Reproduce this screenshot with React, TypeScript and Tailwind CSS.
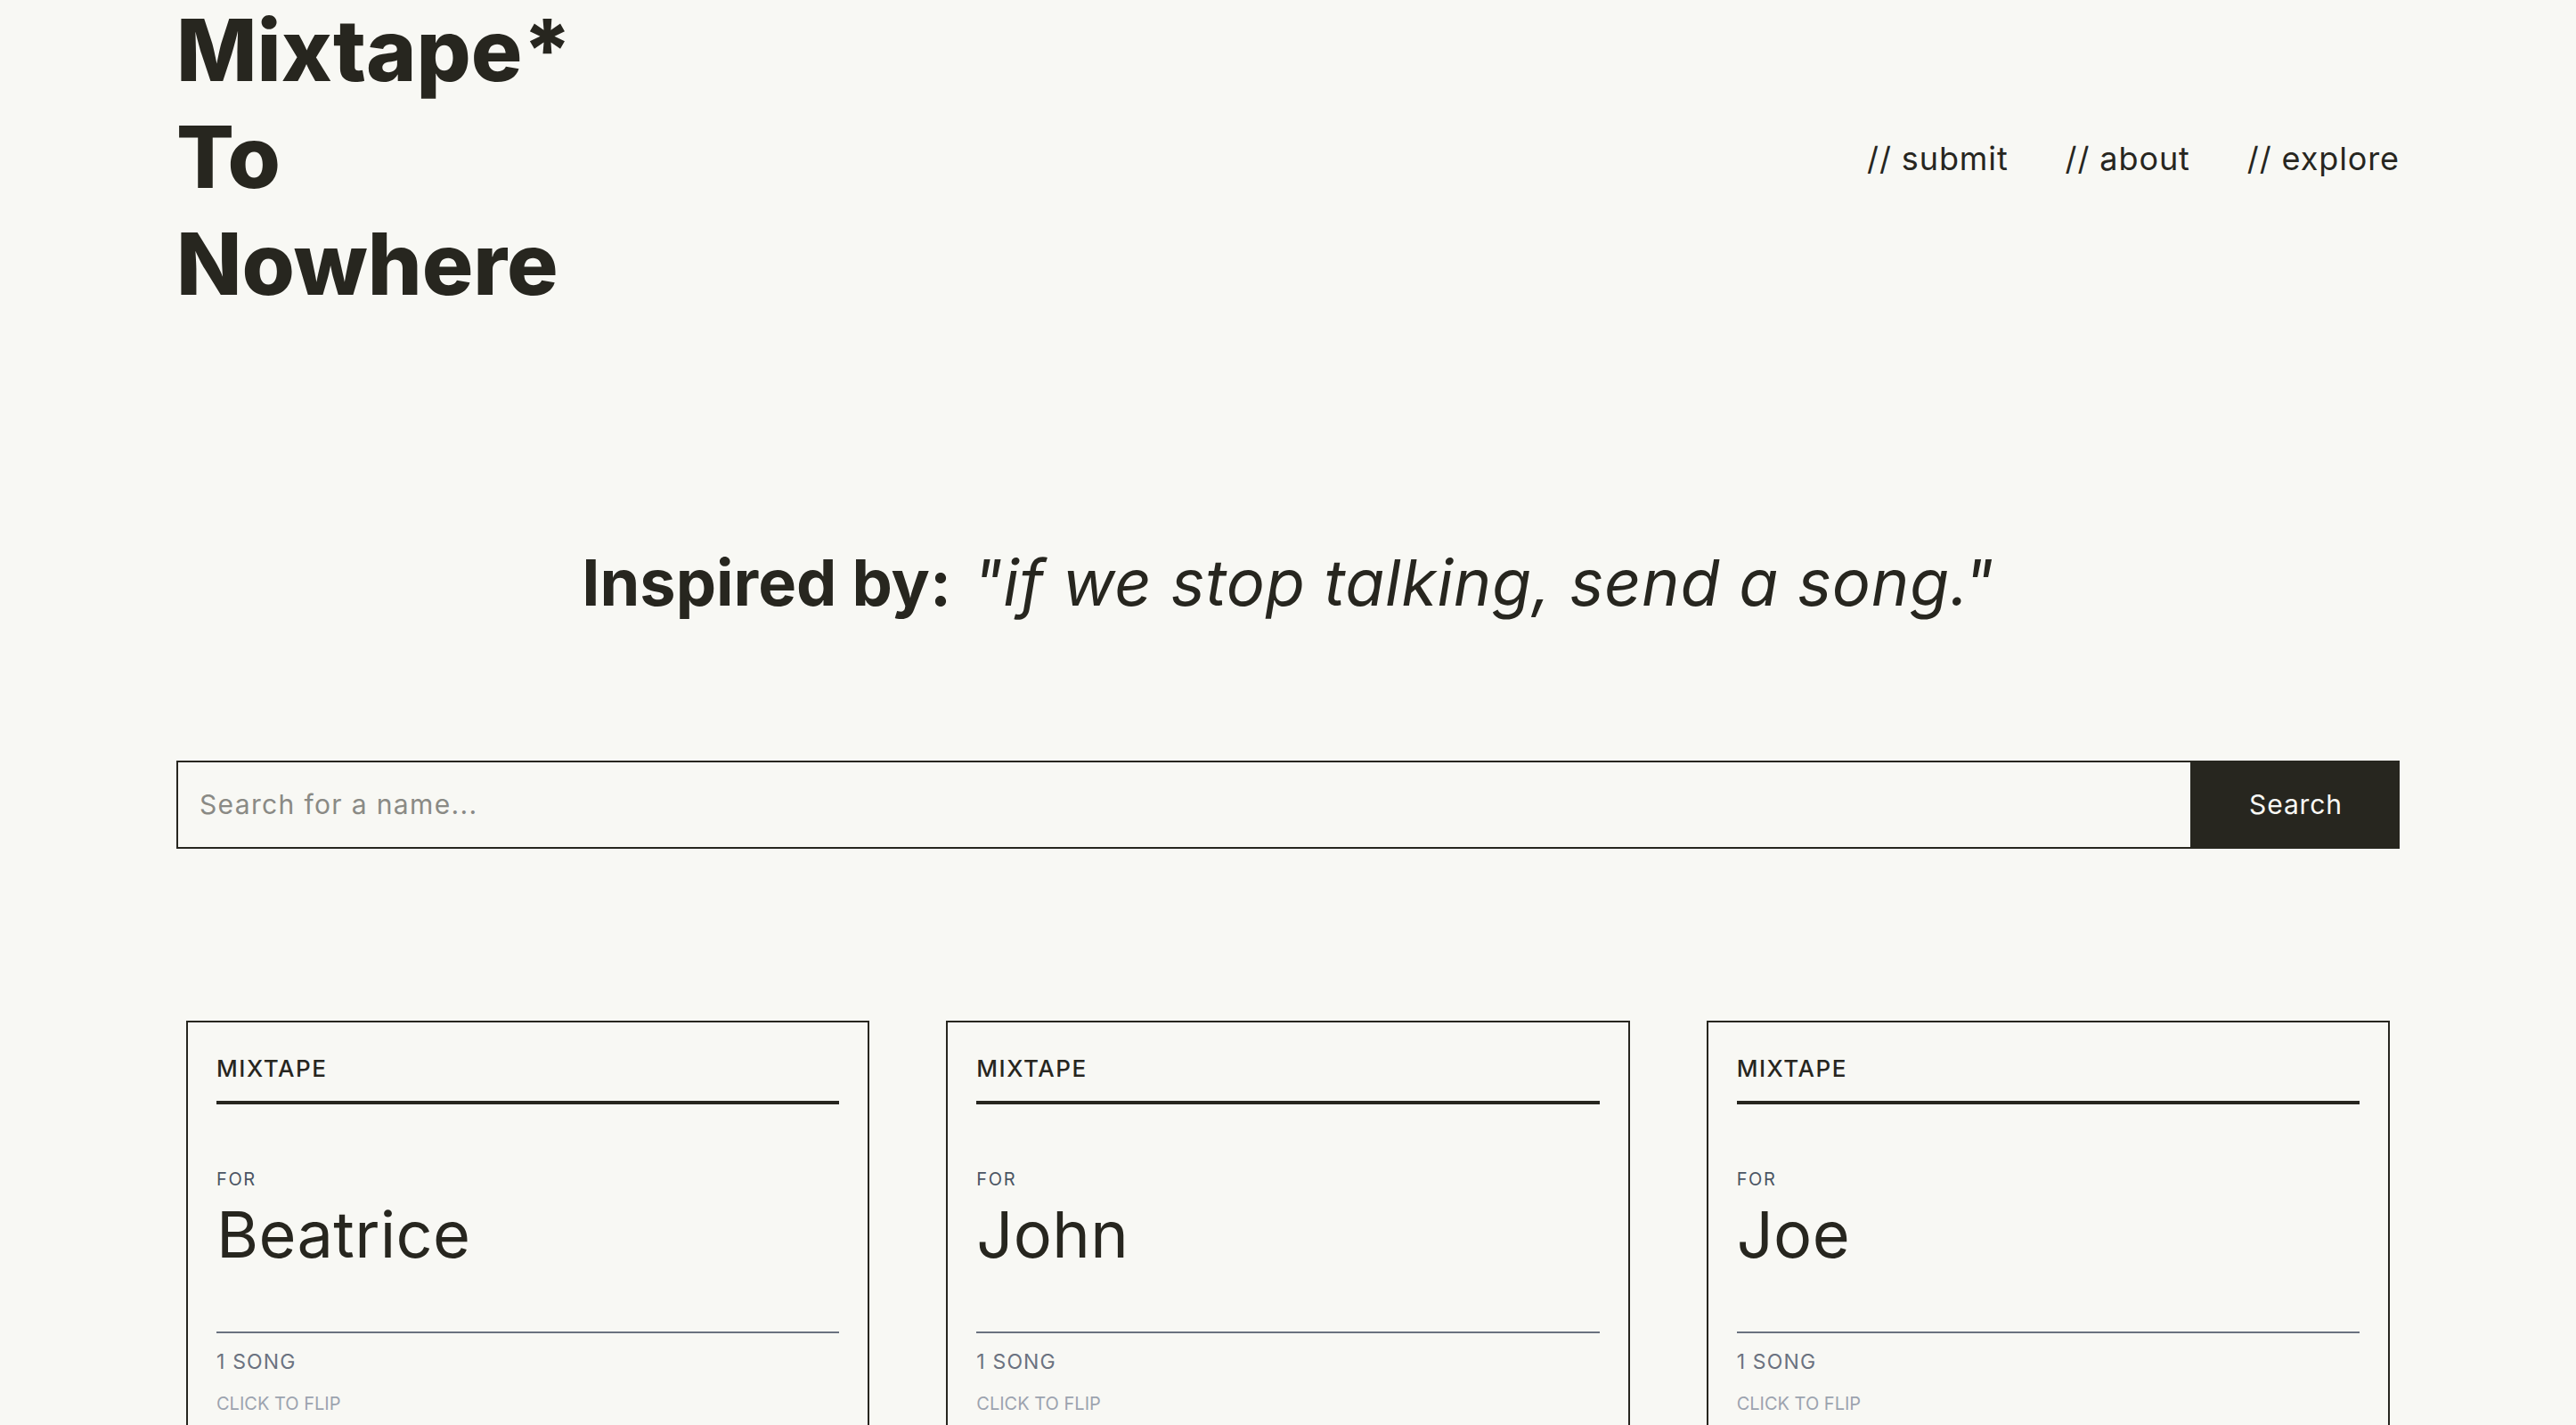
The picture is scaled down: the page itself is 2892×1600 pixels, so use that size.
const cards = [
  { name: 'Beatrice', songs: 1 },
  { name: 'John', songs: 1 },
  { name: 'Joe', songs: 1 },
];

const links = ['submit', 'about', 'explore'];

function MixtapeCard({ name, songs }: { name: string; songs: number }) {
  return (
    <div className="border-2 border-[#27261f] px-[32px] pt-[32px] pb-[40px]">
      <div className="border-b-4 border-[#27261f] pb-[17px]">
        <p className="text-[26px] leading-[1.5] font-medium tracking-[0.06em] text-[#27261f]">MIXTAPE</p>
      </div>
      <div className="pt-[69px] pb-[65px] border-b-2 border-[#6b7280]">
        <p className="text-[20px] leading-[1.5] tracking-[0.08em] text-[#4b5563]">FOR</p>
        <p className="mt-[4px] text-[72px] leading-[1.2] tracking-[0.005em] text-[#27261f]">{name}</p>
      </div>
      <p className="mt-[15px] text-[23px] leading-[1.5] tracking-[0.05em] text-[#6b7280]">
        {songs} {songs === 1 ? 'SONG' : 'SONGS'}
      </p>
      <p className="mt-[15px] text-[20px] leading-[1.5] text-[#9ca3af]">CLICK TO FLIP</p>
    </div>
  );
}

export default function App() {
  return (
    <div className="min-h-screen bg-[#f8f8f4] text-[#27261f] font-['Inter',sans-serif]">
      <div className="px-[198px]">
        {/* Header */}
        <header className="flex items-center justify-between">
          <h1 className="-mt-[4px] text-[96px] leading-[120px] font-extrabold">
            Mixtape*
            <br />
            To
            <br />
            Nowhere
          </h1>
          <nav className="flex gap-[64px] text-[36px] leading-none tracking-[0.025em]">
            {links.map((l) => (
              <a key={l} href="#" className="text-[#27261f]">
                // {l}
              </a>
            ))}
          </nav>
        </header>

        {/* Inspiration */}
        <div className="mt-[255px] flex justify-center gap-[24px] text-[72px] leading-[1.2]">
          <span className="font-bold">Inspired by:</span>
          <span className="italic tracking-[0.01em]">"if we stop talking, send a song."</span>
        </div>

        {/* Search */}
        <form className="mt-[157px] flex h-[99px]" onSubmit={(e) => e.preventDefault()}>
          <input
            type="text"
            placeholder="Search for a name..."
            className="flex-1 border-2 border-[#27261f] bg-transparent px-[24px] text-[30px] tracking-[0.045em] outline-none placeholder:text-[#8a8a85]"
          />
          <button type="submit" className="bg-[#27261f] px-[64px] text-[30px] tracking-[0.03em] text-[#f8f8f4]">
            Search
          </button>
        </form>

        {/* Cards */}
        <div className="mt-[193px] grid grid-cols-3 gap-[86px] px-[11px]">
          {cards.map((c) => (
            <MixtapeCard key={c.name} name={c.name} songs={c.songs} />
          ))}
        </div>
      </div>
    </div>
  );
}
